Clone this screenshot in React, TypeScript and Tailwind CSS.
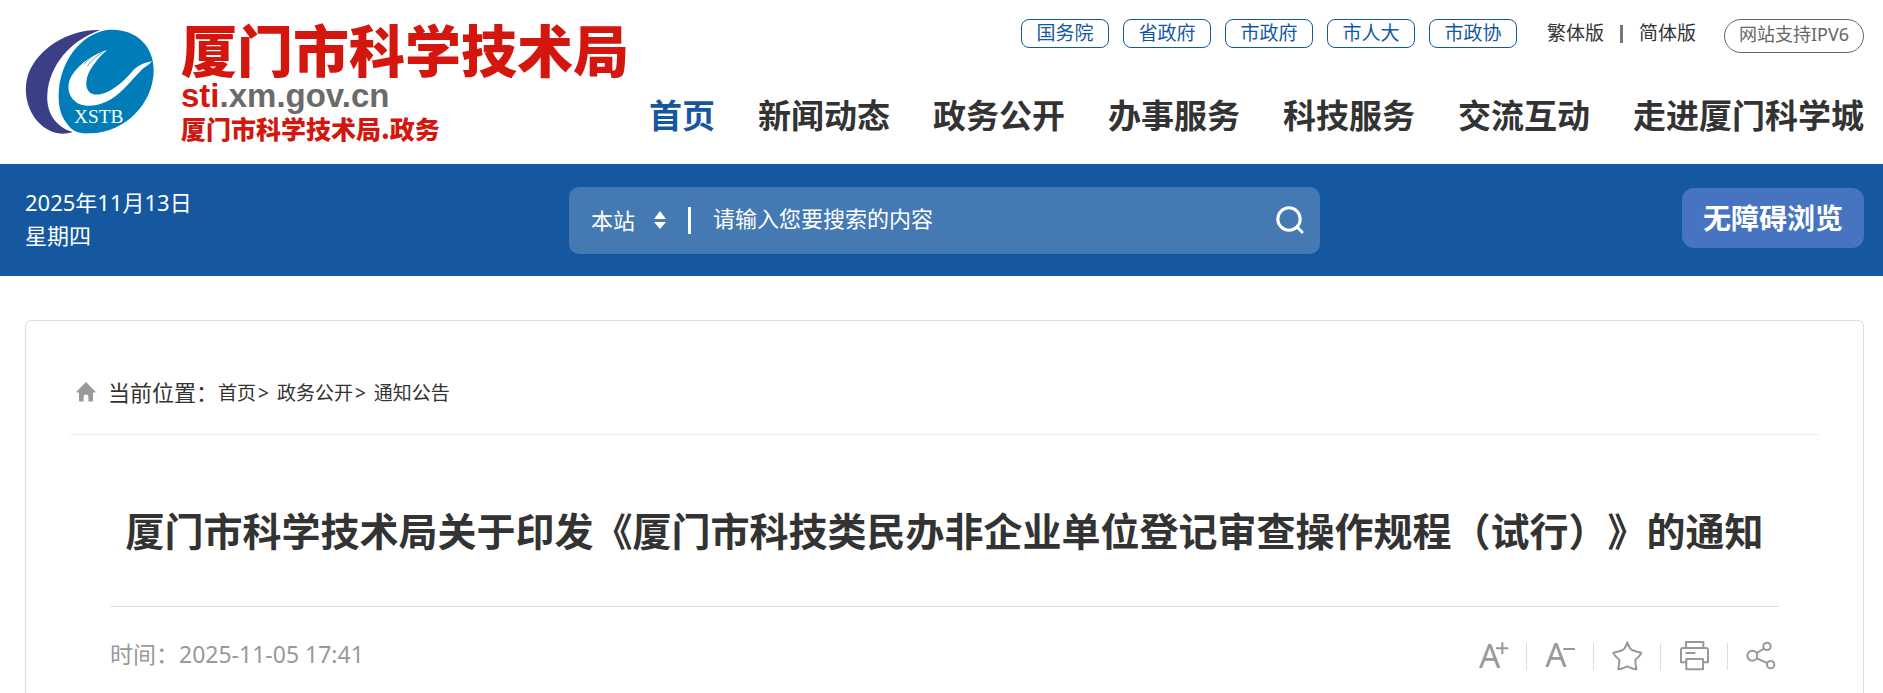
import React from 'react';

const govLinks = ['国务院', '省政府', '市政府', '市人大', '市政协'];

const navItems = ['首页', '新闻动态', '政务公开', '办事服务', '科技服务', '交流互动', '走进厦门科学城'];

const crumbs = ['首页', '政务公开', '通知公告'];

const tools = [
  { label: '放大字体', icon: FontPlusIcon },
  { label: '缩小字体', icon: FontMinusIcon },
  { label: '收藏', icon: StarIcon },
  { label: '打印', icon: PrintIcon },
  { label: '分享', icon: ShareIcon },
];

export default function App() {
  return (
    <div className="bg-white text-[#333] font-['Noto_Sans','Noto_Sans_CJK_SC',sans-serif]">
      <Header />
      <SearchBar />
      <main className="pl-[25px] pr-[19px] pt-11">
        <Article />
      </main>
    </div>
  );
}

function Header() {
  return (
    <header className="flex justify-between pl-[25px] pr-[19px] pb-5">
      <a href="#" className="flex shrink-0 pt-5" aria-label="厦门市科学技术局">
        <Emblem />
        <div className="ml-[26px] whitespace-nowrap font-['Noto_Sans_CJK_SC',sans-serif] text-[#d3170f]">
          <div className="text-[56px] leading-14 font-black">厦门市科学技术局</div>
          <div className="mt-1 text-[33px] leading-8 font-bold font-['Liberation_Sans',sans-serif]">
            sti<span className="text-[#6b6b6b]">.xm.gov.cn</span>
          </div>
          <div className="text-[25px] leading-8 font-black">厦门市科学技术局.政务</div>
        </div>
      </a>

      <div className="flex flex-col items-end pt-[19px] whitespace-nowrap">
        <div className="flex items-start">
          <ul className="flex gap-3.5">
            {govLinks.map((name) => (
              <li key={name}>
                <a
                  href="#"
                  className="flex h-[29px] w-[88px] items-center justify-center rounded-lg border border-[#1558a0] text-[19px] text-[#1558a0]"
                >
                  {name}
                </a>
              </li>
            ))}
          </ul>
          <div className="ml-[30px] flex h-[29px] items-center text-[19px]">
            <a href="#">繁体版</a>
            <span className="mx-4 h-[18px] w-[3px] bg-[#777]" />
            <a href="#">简体版</a>
          </div>
          <a
            href="#"
            className="ml-7 flex h-[34px] w-[140px] items-center justify-center rounded-full border border-[#666] pb-1 text-[18px] text-[#666]"
          >
            网站支持IPV6
          </a>
        </div>

        <nav className="mt-[38px]">
          <ul className="flex gap-[43px] text-[33px] leading-[50px] font-bold">
            {navItems.map((item, i) => (
              <li key={item}>
                <a href="#" className={i === 0 ? 'text-[#1558a0]' : ''}>{item}</a>
              </li>
            ))}
          </ul>
        </nav>
      </div>
    </header>
  );
}

function SearchBar() {
  return (
    <div className="flex items-center bg-[#1558a0] py-[22px] pl-[25px] pr-[19px] text-[22px] text-white">
      <div className="flex-1 pb-0.5 leading-[33px]">
        <p>2025年11月13日</p>
        <p>星期四</p>
      </div>

      <form className="flex h-[67px] w-[751px] items-center rounded-[10px] bg-[#4479b4] pl-[22px] pr-4" onSubmit={(e) => e.preventDefault()}>
        <select aria-label="搜索范围" className="h-8 appearance-none bg-transparent outline-none">
          <option>本站</option>
        </select>
        <svg width="12" height="18" viewBox="0 0 12 18" className="ml-[18px]" fill="currentColor" aria-hidden="true">
          <path d="M6 0l6 8H0z" />
          <path d="M6 18l6-7H0z" />
        </svg>
        <span className="ml-[22px] h-[27px] w-[3px] bg-white" />
        <input
          type="text"
          aria-label="搜索内容"
          placeholder="请输入您要搜索的内容"
          className="ml-[22px] h-9 min-w-0 flex-1 bg-transparent pb-1 outline-none placeholder:text-white"
        />
        <button type="submit" aria-label="搜索">
          <svg width="28" height="28" viewBox="0 0 28 28" fill="none" stroke="currentColor" strokeWidth="3" strokeLinecap="round" aria-hidden="true">
            <circle cx="13" cy="13" r="11.2" />
            <path d="M21.5 21.5l4.5 4.5" />
          </svg>
        </button>
      </form>

      <div className="flex flex-1 justify-end pb-1">
        <button type="button" className="h-[60px] rounded-xl bg-[#4774c0] px-[21px] text-[28px] font-bold">
          无障碍浏览
        </button>
      </div>
    </div>
  );
}

function Article() {
  return (
    <section className="rounded-t-md border border-b-0 border-[#ddd] px-11 pt-[50px]">
      <div className="box-content flex h-[42px] items-center border-b border-[#eee] pb-[21px] pl-1.5">
        <HomeIcon />
        <span className="ml-3 text-[22px]">当前位置：</span>
        <nav aria-label="当前位置" className="flex gap-2 pt-0.5 text-[19px]">
          {crumbs.map((c, i) => (
            <span key={c}>
              <a href="#">{c}</a>
              {i < crumbs.length - 1 && <span className="ml-0.5">&gt;</span>}
            </span>
          ))}
        </nav>
      </div>

      <div className="px-10">
        <h1 className="border-b border-[#ddd] pt-[66px] pb-[45px] text-center text-[39px] leading-[60px] font-bold whitespace-nowrap [text-spacing-trim:space-all]">
          厦门市科学技术局关于印发《厦门市科技类民办非企业单位登记审查操作规程（试行）》的通知
        </h1>
        <div className="flex items-center justify-between pt-[34px] pb-[23px] text-[#999]">
          <p className="pb-1 text-[23px] leading-[26px]">时间：2025-11-05 17:41</p>
          <div className="flex items-center pr-[3px]">
            {tools.map(({ label, icon: Icon }, i) => (
              <React.Fragment key={label}>
                {i > 0 && <span className="mx-[18px] h-[27px] w-px bg-[#ddd]" />}
                <button type="button" aria-label={label}>
                  <Icon />
                </button>
              </React.Fragment>
            ))}
          </div>
        </div>
      </div>
    </section>
  );
}

function Emblem() {
  return (
    <svg width="130" height="105" viewBox="45 40 390 315" className="mt-[9px] shrink-0" aria-hidden="true">
      <path d="M270 43C180 40 85 95 55 175C30 250 70 335 140 352C158 356 172 354 188 349C140 335 108 295 112 235C118 150 180 75 270 43Z" fill="#3b3f87" />
      <path d="M290 43C370 35 432 85 431 165C430 260 350 350 240 353C205 356 185 345 172 325C150 300 143 265 147 220C155 140 205 60 290 43Z" fill="#007cb8" />
      <path
        d="M291 103C262 110 208 140 184 182C166 216 178 250 206 264C240 279 285 266 316 242C352 214 376 180 400 158C408 151 418 147 426 137C398 143 382 150 366 168C340 198 308 226 274 235C246 242 226 228 229 198C232 168 258 132 291 103Z"
        fill="#fff"
      />
      <path d="M280 108C262 118 244 134 232 152M272 106C250 118 234 130 222 146" stroke="#007cb8" strokeWidth="2" fill="none" />
      <text x="192" y="322" fontSize="58" fill="#fff" className="font-['Liberation_Serif',serif]">XSTB</text>
    </svg>
  );
}

function HomeIcon() {
  return (
    <svg width="20" height="20" viewBox="0 0 20 20" fill="#999" aria-hidden="true">
      <path d="M10 0L0.6 9.4Q0.2 10.4 1.2 10.4H3V18.4Q3 19.6 4.2 19.6H7.6V14.4Q7.6 12.6 10 12.6T12.4 14.4V19.6H15.8Q17 19.6 17 18.4V10.4H18.8Q19.8 10.4 19.4 9.4Z" />
    </svg>
  );
}

function ToolSvg({ children }: { children: React.ReactNode }) {
  return (
    <svg
      width="30"
      height="30"
      viewBox="0 0 90 90"
      fill="none"
      stroke="currentColor"
      strokeWidth="6"
      strokeLinejoin="round"
      className="overflow-visible"
      aria-hidden="true"
    >
      {children}
    </svg>
  );
}

function FontPlusIcon() {
  return (
    <ToolSvg>
      <text x="3" y="80" fontSize="100" stroke="none" fill="currentColor">A</text>
      <path d="M54 22h37M73 4v36" />
    </ToolSvg>
  );
}

function FontMinusIcon() {
  return (
    <ToolSvg>
      <text x="1" y="78" fontSize="100" stroke="none" fill="currentColor">A</text>
      <path d="M55 24h35" />
    </ToolSvg>
  );
}

function StarIcon() {
  return (
    <ToolSvg>
      <path d="M46 4Q52 22 60 27Q70 32 88 35Q86 42 70 56Q70 66 73 85Q64 84 46 76Q28 84 19 85Q22 66 22 56Q6 42 4 35Q22 32 32 27Q40 22 46 4Z" />
    </ToolSvg>
  );
}

function PrintIcon() {
  return (
    <ToolSvg>
      <path d="M21 21V3H73V21M22 64H6V27Q6 21 12 21H81Q87 21 87 27V64H72M22 54H72V85H22ZM20 36H49" />
    </ToolSvg>
  );
}

function ShareIcon() {
  return (
    <ToolSvg>
      <circle cx="19" cy="44" r="15" />
      <circle cx="63" cy="16" r="11" />
      <circle cx="74" cy="71" r="11" />
      <path d="M32 36L54 23M32 52L64 66" />
    </ToolSvg>
  );
}
